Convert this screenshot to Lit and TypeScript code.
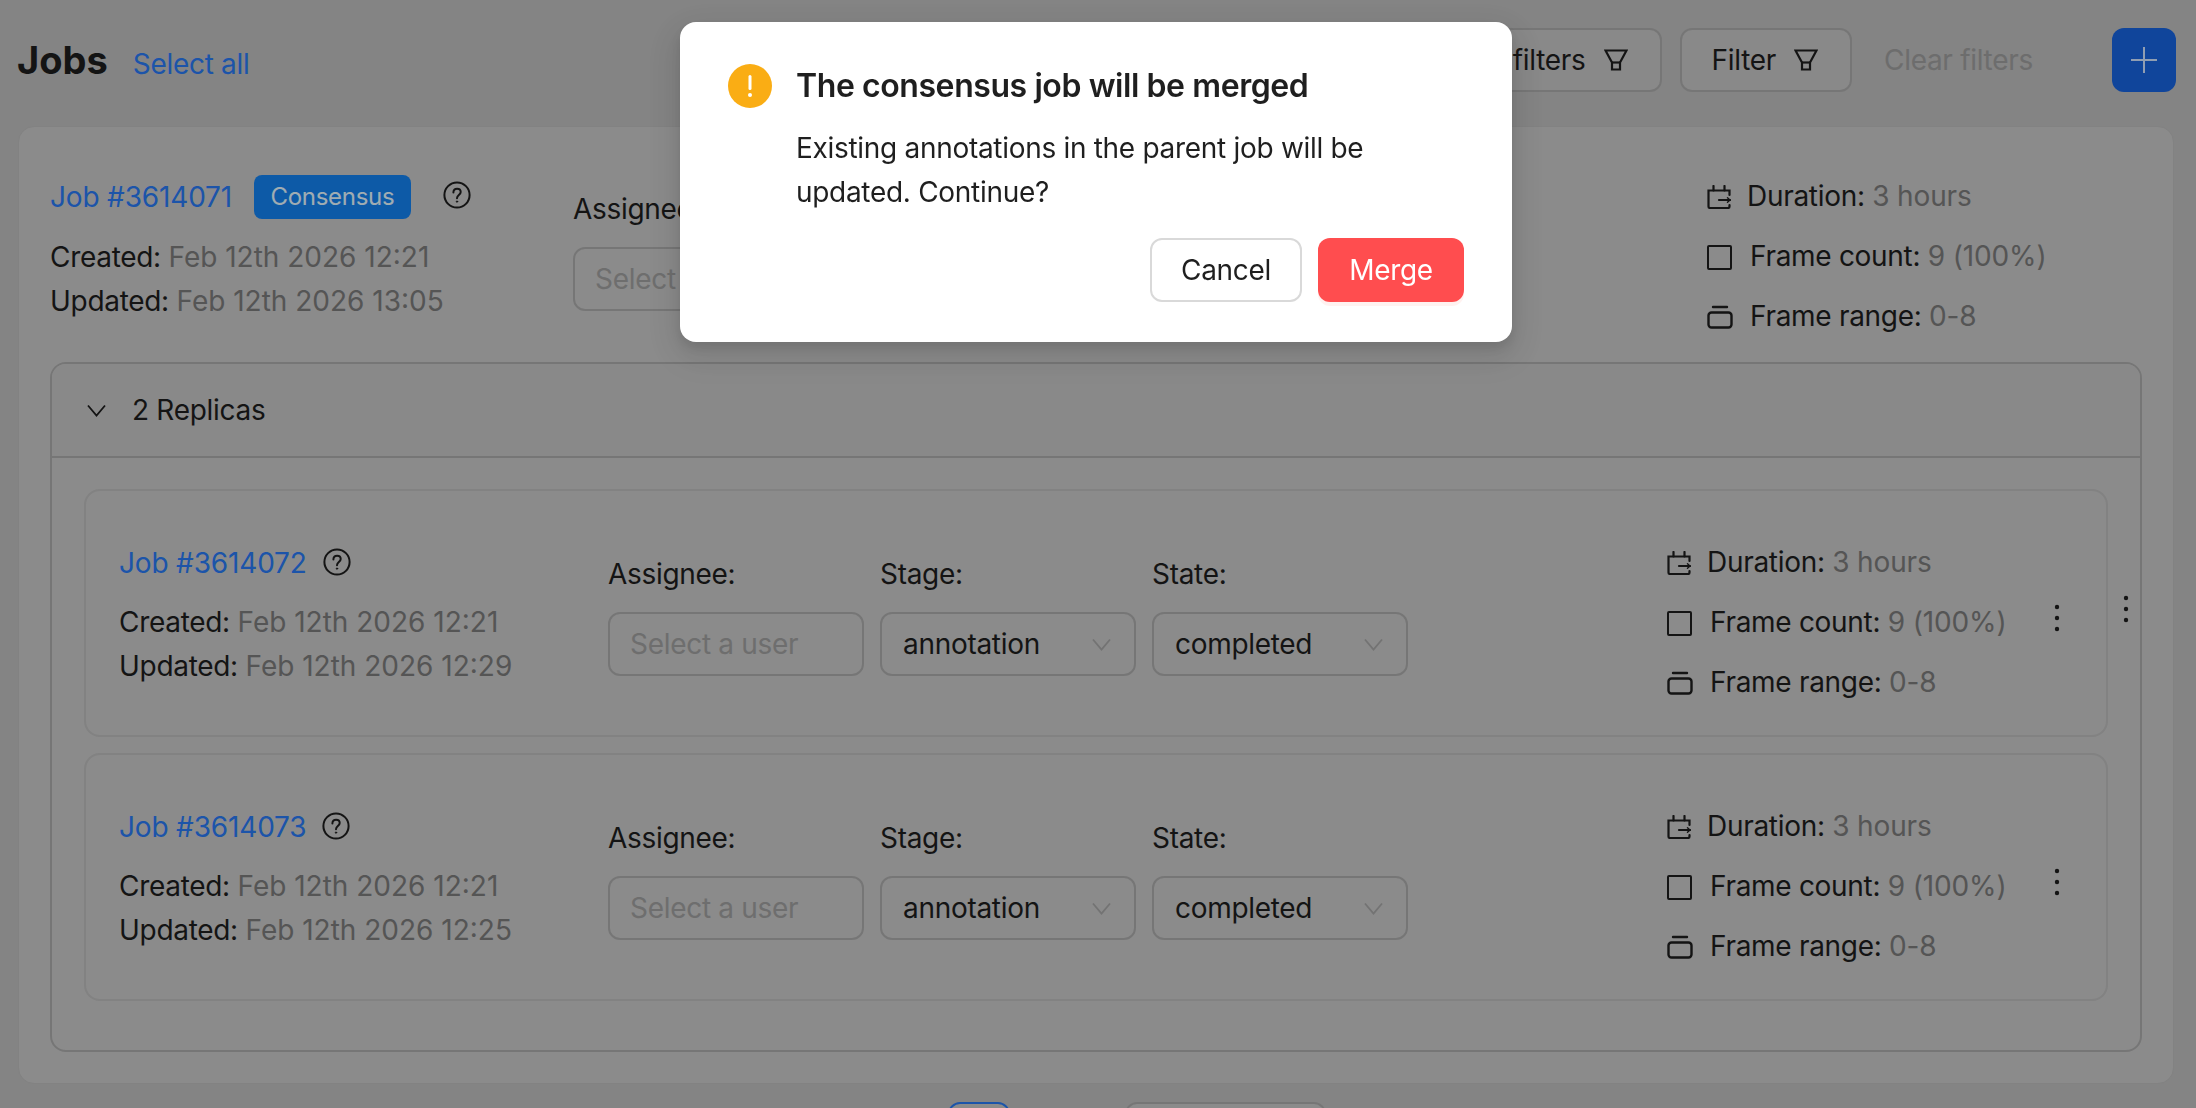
import { LitElement, html, css, svg } from "lit";
import { customElement } from "lit/decorators.js";

const funnel = html`<svg class="funnel" viewBox="0 0 24 22" fill="none" stroke="currentColor" stroke-width="2.200"><path d="M1.500 1.500H22.500L16 13.500V20.500H8V13.500Z"/><path d="M8 13.500H16"/></svg>`;
const help = html`<svg class="help" viewBox="0 0 28 28" fill="none" stroke="currentColor" stroke-width="2" stroke-linecap="round"><circle cx="14" cy="14" r="12.600"/><path d="M10.400 11.400c0-2.200 1.600-3.700 3.700-3.700s3.600 1.400 3.600 3.300c0 3-3.700 3.200-3.700 6.200"/><circle cx="14" cy="20.600" r=".7" fill="currentColor" stroke-width="1"/></svg>`;
const chevron = svg`<path d="M2 2.500L10.500 12.500L19 2.500" fill="none" stroke="currentColor" stroke-width="1.800"/>`;
const durationIcon = html`<svg class="i-dur" viewBox="0 0 24 24" fill="none" stroke="currentColor" stroke-width="2.200" stroke-linecap="round"><path d="M22.500 10V5.500H1.500V21.500a1.500 1.500 0 0 0 1.500 1.500H21a1.500 1.500 0 0 0 1.500-1.500V20"/><path d="M6.500 1V5.500M17.500 1V5.500M12 15H23"/><path d="M20.500 12.800L23 15L20.500 17.200" stroke-width="1.400"/></svg>`;
const countIcon = html`<svg class="i-cnt" viewBox="0 0 25 25" fill="none" stroke="currentColor" stroke-width="2"><rect x="1" y="1" width="23" height="23" rx="1"/></svg>`;
const rangeIcon = html`<svg class="i-rng" viewBox="0 0 26 24" fill="none" stroke="currentColor" stroke-width="2.400" stroke-linecap="round"><rect x="1.500" y="7.500" width="23" height="15" rx="3"/><path d="M6 2H20"/></svg>`;
const dots = html`<svg class="dots" viewBox="0 0 6 28" fill="currentColor"><circle cx="3" cy="3" r="2.200"/><circle cx="3" cy="14" r="2.200"/><circle cx="3" cy="25" r="2.200"/></svg>`;

interface Job { id: string; created: string; updated: string; consensus?: boolean }

const replicas: Job[] = [
  { id: "3614072", created: "Feb 12th 2026 12:21", updated: "Feb 12th 2026 12:29" },
  { id: "3614073", created: "Feb 12th 2026 12:21", updated: "Feb 12th 2026 12:25" },
];
const parent: Job = { id: "3614071", created: "Feb 12th 2026 12:21", updated: "Feb 12th 2026 13:05", consensus: true };

@customElement("app-root")
export class AppRoot extends LitElement {
  static styles = css`
    :host {
      display: block;
      height: 1108px;
      overflow: hidden;
      position: relative;
      background: #bdbdbd;
      font-family: Inter, "Liberation Sans", sans-serif;
      font-size: 28px;
      letter-spacing: -0.3px;
      color: #1d1d1d;
      line-height: 44px;
    }
    * { box-sizing: border-box; }
    .page { padding: 28px 20px 0 18px; }

    .top { display: flex; align-items: center; height: 64px; margin-bottom: 34px; }
    .title { font-size: 38px; font-weight: 700; margin-left: -1px; line-height: 64px; letter-spacing: 0; }
    .select-all { color: #2979f3; margin-left: 25px; margin-top: 8px; }
    .filters { margin-left: auto; display: flex; align-items: center; gap: 18px; }
    .fbtn {
      height: 64px; border: 2px solid #aaa; border-radius: 12px; background: #c4c4c4;
      display: flex; align-items: center; gap: 18px; padding: 0 32px 0 30px; color: #1d1d1d;
    }
    .funnel { width: 24px; height: 22px; }
    .clear { color: #9c9c9c; margin-left: 14px; width: 210px; }
    .plus {
      width: 64px; height: 64px; background: #1763df; border-radius: 12px;
      display: flex; align-items: center; justify-content: center; color: #cfe3ff;
    }
    .plus svg { width: 28px; height: 28px; }

    .card { background: #c7c7c7; border-radius: 16px; border: 1px solid #bababa; padding: 0 31px 32px; height: 958px; margin-right: 2px; }

    .job { display: flex; align-items: flex-start; }
    .job.outer { padding-top: 40px; height: 235px; }
    .job.inner { padding-top: 42px; }
    .left { flex: none; }
    .outer .left { width: 523px; }
    .inner .left { width: 489px; }
    .head { display: flex; align-items: center; height: 60px; }
    .link { color: #2979f3; letter-spacing: -0.17px; }
    .badge {
      height: 44px; line-height: 44px; padding: 0 16.500px; font-size: 24px; color: #e6f7ff;
      background: #1481f0; border-radius: 8px; margin-left: 22px;
    }
    .help { width: 28px; height: 28px; color: #1d1d1d; margin-left: 16px; margin-top: -3px; }
    .outer .help { margin-left: 32px; margin-top: -4px; }
    .dates { margin-top: 8px; line-height: 43.500px; }
    .outer .dates { margin-top: 9px; }
    .dates .gray { letter-spacing: 0; }
    .gray { color: #7a7a7a; }

    .fields { display: flex; gap: 16px; flex: none; }
    .outer .fields { width: 1134px; padding-top: 20px; }
    .inner .fields { width: 1059px; padding-top: 19px; }
    .field label { display: block; }
    .select {
      width: 256px; height: 64px; margin-top: 16px; border: 2px solid #aaa; border-radius: 12px;
      background: #c7c7c7; display: flex; align-items: center; justify-content: space-between;
      padding: 0 22px 0 21px;
    }
    .select.empty { color: #9e9e9e; padding-left: 20px; }
    .select svg { width: 21px; height: 15px; color: #a5a5a5; }

    .stats { flex: none; }
    .inner .stats { width: 373px; }
    .stat { height: 60px; display: flex; align-items: center; white-space: nowrap; }
    .stat .gray { letter-spacing: -0.15px; }
    .i-dur { width: 24px; height: 24px; margin-right: 16px; flex: none; }
    .i-cnt { width: 25px; height: 25px; margin-right: 18px; flex: none; }
    .i-rng { width: 26px; height: 24px; margin-right: 17px; flex: none; }
    .stat .txt { margin-top: -2px; }
    .more { flex: none; width: 34px; display: flex; justify-content: center; margin-top: 71px; }
    .dots { width: 6px; height: 28px; color: #1d1d1d; }

    .collapse { border: 2px solid #aaa; border-radius: 16px; overflow: hidden; }
    .c-head {
      height: 94px; border-bottom: 2px solid #aaa; background: #c5c5c5; display: flex;
      align-items: center; padding-left: 34px; gap: 25px;
    }
    .c-head svg { width: 21px; height: 15px; color: #1d1d1d; }
    .c-body { display: flex; padding: 31px 0 49px 32px; }
    .cards { width: 2024px; display: flex; flex-direction: column; gap: 16px; flex: none; }
    .job.inner { height: 248px; border: 2px solid #bababa; border-radius: 16px; padding-left: 33px; padding-right: 0; }
    .side-more { margin-top: 106px; width: 36px; flex: none; display: flex; justify-content: center; }

    .pager { display: flex; margin-top: 18px; padding-left: 930px; gap: 115px; }
    .pg { width: 62px; height: 64px; border: 2px solid #2979f3; border-radius: 12px; background: #c7c7c7; text-align: center; line-height: 60px; color: #2979f3; }
    .size { width: 201px; height: 64px; border: 2px solid #aaa; border-radius: 12px; background: #c7c7c7; line-height: 60px; padding-left: 22px; }

    .mask { position: fixed; inset: 0; background: rgba(0, 0, 0, 0.3); }
    .modal {
      position: fixed; left: 680px; top: 22px; width: 832px; height: 320px; background: #fff;
      border-radius: 16px; padding: 42px 48px 40px 48px;
      box-shadow: 0 12px 32px 8px rgba(0, 0, 0, 0.1), 0 6px 12px rgba(0, 0, 0, 0.1);
      display: flex; flex-direction: column; color: #1f1f1f;
    }
    .m-head { display: flex; align-items: center; gap: 24px; height: 44px; }
    .m-icon { width: 44px; height: 44px; flex: none; }
    .m-title { font-size: 32px; font-weight: 600; letter-spacing: -0.42px; }
    .m-text { margin: 18px 0 0 68px; line-height: 44px; }
    .m-btns { margin-top: auto; display: flex; justify-content: flex-end; gap: 16px; }
    .m-btn { height: 64px; border-radius: 12px; display: flex; align-items: center; justify-content: center; }
    .cancel { width: 152px; border: 2px solid #d9d9d9; background: #fff; color: #1f1f1f; }
    .merge { width: 146px; background: #ff4d4f; color: #fff; box-shadow: 0 4px 0 rgba(255, 38, 5, 0.06); }
  `;

  private select(label: string, value: string, empty = false) {
    return html`<div class="field">
      <label>${label}</label>
      <div class="select ${empty ? "empty" : ""}">
        <span>${value}</span>
        ${empty ? "" : html`<svg viewBox="0 0 21 15">${chevron}</svg>`}
      </div>
    </div>`;
  }

  private job(j: Job, kind: "outer" | "inner") {
    return html`<div class="job ${kind}">
      <div class="left">
        <div class="head">
          <span class="link">Job #${j.id}</span>
          ${j.consensus ? html`<span class="badge">Consensus</span>` : ""}
          ${help}
        </div>
        <div class="dates">
          <div>Created: <span class="gray">${j.created}</span></div>
          <div>Updated: <span class="gray">${j.updated}</span></div>
        </div>
      </div>
      <div class="fields">
        ${this.select("Assignee:", "Select a user", true)}
        ${this.select("Stage:", "annotation")}
        ${this.select("State:", "completed")}
      </div>
      <div class="stats">
        <div class="stat">${durationIcon}<span class="txt">Duration: <span class="gray">3 hours</span></span></div>
        <div class="stat">${countIcon}<span class="txt">Frame count: <span class="gray">9 (100%)</span></span></div>
        <div class="stat">${rangeIcon}<span class="txt">Frame range: <span class="gray">0-8</span></span></div>
      </div>
      ${kind === "inner" ? html`<div class="more">${dots}</div>` : ""}
    </div>`;
  }

  render() {
    return html`
      <div class="page">
        <div class="top">
          <div class="title">Jobs</div>
          <div class="select-all">Select all</div>
          <div class="filters">
            <div class="fbtn">Quick filters ${funnel}</div>
            <div class="fbtn">Filter ${funnel}</div>
            <div class="clear">Clear filters</div>
            <div class="plus">
              <svg viewBox="0 0 28 28" fill="none" stroke="currentColor" stroke-width="2"><path d="M14 1V27M1 14H27"/></svg>
            </div>
          </div>
        </div>
        <div class="card">
          ${this.job(parent, "outer")}
          <div class="collapse">
            <div class="c-head">
              <svg viewBox="0 0 21 15">${chevron}</svg>
              <span>2 Replicas</span>
            </div>
            <div class="c-body">
              <div class="cards">${replicas.map((r) => this.job(r, "inner"))}</div>
              <div class="side-more">${dots}</div>
            </div>
          </div>
        </div>
        <div class="pager">
          <div class="pg">1</div>
          <div class="size">10 / page</div>
        </div>
      </div>
      <div class="mask"></div>
      <div class="modal" role="dialog">
        <div class="m-head">
          <svg class="m-icon" viewBox="0 0 44 44">
            <circle cx="22" cy="22" r="22" fill="#faad14"/>
            <rect x="20.500" y="11" width="3" height="15" rx="1.500" fill="#fff"/>
            <circle cx="22" cy="31" r="2" fill="#fff"/>
          </svg>
          <div class="m-title">The consensus job will be merged</div>
        </div>
        <div class="m-text">Existing annotations in the parent job will be<br />updated. Continue?</div>
        <div class="m-btns">
          <div class="m-btn cancel">Cancel</div>
          <div class="m-btn merge">Merge</div>
        </div>
      </div>
    `;
  }
}
